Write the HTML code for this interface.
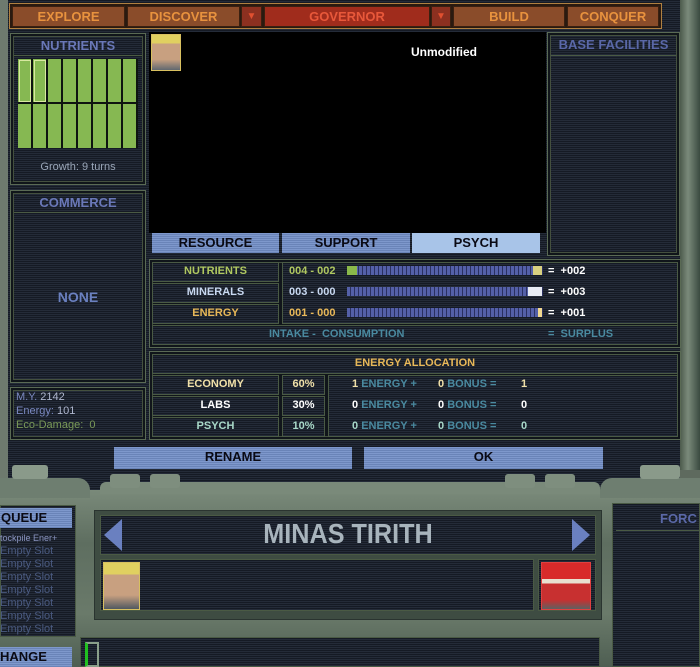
<!DOCTYPE html>
<html><head><style>
*{margin:0;padding:0;box-sizing:border-box}
body{width:700px;height:667px;overflow:hidden;background:#5e6a5e;font-family:"Liberation Sans",sans-serif;position:relative}
.a{position:absolute}
.scan{background:repeating-linear-gradient(#151a24 0 1px,#242b38 1px 2px)}
.pan{position:absolute;border:1px solid #5a6a54;box-shadow:inset 0 0 0 2px #10151a,inset 0 0 0 3px #44503e}
.cell{position:absolute;border:1px solid #4a5a44;background:repeating-linear-gradient(#151a24 0 1px,#242b38 1px 2px)}
.t{position:absolute;font-weight:bold;text-align:center;white-space:nowrap}
.tb{position:absolute;top:6px;height:21px;background:#8a4c2a;border:1px solid #3a2010;color:#e8923e;font-weight:bold;font-size:13px;text-align:center;line-height:20px}
.btn{position:absolute;background:repeating-linear-gradient(#7e98cc 0 1px,#6a84b8 1px 2px);color:#0a0a14;font-weight:bold;font-size:13px;text-align:center;line-height:20px}
.bar{position:absolute;height:9px;background:repeating-linear-gradient(90deg,#5460a8 0 3px,#2a3060 3px 4px)}
.n{position:absolute;font-weight:bold;font-size:11px;white-space:nowrap}
.g{color:#4a8aa0}
</style></head><body>
<div class="a scan" style="left:8px;top:0;width:672px;height:492px"></div>
<div class="a" style="left:680px;top:0;width:20px;height:470px;background:linear-gradient(90deg,#4c5a4c,#7a8a7a 40%,#3a4a40)"></div>
<div class="a" style="left:0;top:0;width:8px;height:480px;background:#6e7a6e"></div>
<div class="a" style="left:9px;top:3px;width:653px;height:26px;border:1px solid #b08040;background:#2a1a10"></div>
<div class="tb" style="left:12px;width:113px">EXPLORE</div>
<div class="tb" style="left:127px;width:113px">DISCOVER</div>
<div class="tb" style="left:241px;width:21px;background:#8c3020;color:#e05030;font-size:10px">▼</div>
<div class="tb" style="left:264px;width:166px;background:#a02c1c;color:#e8583a">GOVERNOR</div>
<div class="tb" style="left:431px;width:20px;background:#8c3020;color:#e05030;font-size:10px">▼</div>
<div class="tb" style="left:453px;width:112px">BUILD</div>
<div class="tb" style="left:567px;width:92px">CONQUER</div>
<div class="pan scan" style="left:10px;top:33px;width:136px;height:152px"></div>
<div class="t" style="left:10px;top:38px;width:136px;font-size:13px;color:#6a78b8">NUTRIENTS</div>
<div class="a" style="left:14px;top:55px;width:128px;height:1px;background:#4a5a44"></div>
<div class="a" style="left:18px;top:59px;width:120px;height:89px;background:#0e1410"></div>
<div class="a" style="left:18px;top:59px;width:120px;height:89px;background:repeating-linear-gradient(90deg,#86b852 0 13px,#0e1410 13px 15px)"></div>
<div class="a" style="left:18px;top:102px;width:120px;height:2px;background:#0e1410"></div>
<div class="a" style="left:19px;top:60px;width:12px;height:42px;border:1px solid #d8e8a0"></div>
<div class="a" style="left:34px;top:60px;width:12px;height:42px;border:1px solid #d8e8a0"></div>
<div class="a" style="left:10px;top:161px;width:136px;text-align:center;color:#9aa6b8;font-size:11px">Growth: 9 turns</div>
<div class="pan scan" style="left:10px;top:190px;width:136px;height:193px"></div>
<div class="t" style="left:10px;top:195px;width:136px;font-size:13px;color:#6a78b8">COMMERCE</div>
<div class="a" style="left:14px;top:212px;width:128px;height:1px;background:#4a5a44"></div>
<div class="t" style="left:10px;top:289px;width:136px;font-size:14px;color:#6a80c0">NONE</div>
<div class="pan scan" style="left:10px;top:387px;width:136px;height:53px"></div>
<div class="a" style="left:16px;top:390px;font-size:11px;line-height:14px;color:#7a88c0">M.Y. <span style="color:#b0b8d0">2142</span><br>Energy: <span style="color:#b0b8d0">101</span><br><span style="color:#7a9a58">Eco-Damage:&nbsp; 0</span></div>
<div class="a" style="left:149px;top:32px;width:397px;height:201px;background:#000"></div>
<div class="a" style="left:151px;top:34px;width:30px;height:37px;border:1px solid #d8c060;background:linear-gradient(#e0d060 0 25%,#c8a080 25% 70%,#606870)"></div>
<div class="t" style="left:411px;top:45px;font-size:12px;color:#fff">Unmodified</div>
<div class="pan scan" style="left:547px;top:32px;width:133px;height:224px"></div>
<div class="t" style="left:547px;top:37px;width:133px;font-size:13px;color:#5a68a8">BASE FACILITIES</div>
<div class="a" style="left:551px;top:55px;width:125px;height:1px;background:#4a5a44"></div>
<div class="btn" style="left:152px;top:233px;width:127px;height:20px">RESOURCE</div>
<div class="btn" style="left:282px;top:233px;width:128px;height:20px">SUPPORT</div>
<div class="btn" style="left:412px;top:233px;width:128px;height:20px;background:#a8c4e8">PSYCH</div>
<div class="pan" style="left:149px;top:259px;width:532px;height:89px;background:#10151a"></div>
<div class="cell" style="left:152px;top:262px;width:127px;height:20px"></div>
<div class="cell" style="left:152px;top:283px;width:127px;height:20px"></div>
<div class="cell" style="left:152px;top:304px;width:127px;height:20px"></div>
<div class="cell" style="left:282px;top:262px;width:396px;height:62px"></div>
<div class="cell" style="left:152px;top:325px;width:526px;height:20px"></div>
<div class="t" style="left:152px;top:265px;width:127px;font-size:11px;color:#b0c860">NUTRIENTS</div>
<div class="t" style="left:152px;top:286px;width:127px;font-size:11px;color:#c8d8f0">MINERALS</div>
<div class="t" style="left:152px;top:307px;width:127px;font-size:11px;color:#e8b858">ENERGY</div>
<div class="n" style="left:289px;top:265px;color:#b0c860">004 - 002</div>
<div class="n" style="left:289px;top:286px;color:#c8d8f0">003 - 000</div>
<div class="n" style="left:289px;top:307px;color:#e8b858">001 - 000</div>
<div class="bar" style="left:347px;top:266px;width:196px"></div>
<div class="a" style="left:347px;top:266px;width:10px;height:9px;background:#8ab84a"></div>
<div class="a" style="left:533px;top:266px;width:9px;height:9px;background:#d8d080"></div>
<div class="bar" style="left:347px;top:287px;width:196px"></div>
<div class="a" style="left:528px;top:287px;width:14px;height:9px;background:#e8ecf4"></div>
<div class="bar" style="left:347px;top:308px;width:196px"></div>
<div class="a" style="left:538px;top:308px;width:4px;height:9px;background:#f0d890"></div>
<div class="n" style="left:548px;top:265px;color:#fff">=&nbsp; +002</div>
<div class="n" style="left:548px;top:286px;color:#fff">=&nbsp; +003</div>
<div class="n" style="left:548px;top:307px;color:#fff">=&nbsp; +001</div>
<div class="n g" style="left:269px;top:328px">INTAKE -&nbsp; CONSUMPTION</div>
<div class="n g" style="left:548px;top:328px">=&nbsp; SURPLUS</div>
<div class="pan" style="left:149px;top:351px;width:532px;height:89px;background:#10151a"></div>
<div class="cell" style="left:152px;top:354px;width:526px;height:20px"></div>
<div class="t" style="left:152px;top:357px;width:526px;font-size:11px;color:#e8b858">ENERGY ALLOCATION</div>
<div class="cell" style="left:152px;top:375px;width:127px;height:20px"></div>
<div class="cell" style="left:152px;top:396px;width:127px;height:20px"></div>
<div class="cell" style="left:152px;top:417px;width:127px;height:20px"></div>
<div class="cell" style="left:282px;top:375px;width:43px;height:20px"></div>
<div class="cell" style="left:282px;top:396px;width:43px;height:20px"></div>
<div class="cell" style="left:282px;top:417px;width:43px;height:20px"></div>
<div class="cell" style="left:328px;top:375px;width:350px;height:62px"></div>
<div class="t" style="left:152px;top:378px;width:127px;font-size:11px;color:#f0e0a8">ECONOMY</div>
<div class="t" style="left:152px;top:399px;width:127px;font-size:11px;color:#fff">LABS</div>
<div class="t" style="left:152px;top:420px;width:127px;font-size:11px;color:#a8d8c8">PSYCH</div>
<div class="t" style="left:282px;top:378px;width:43px;font-size:11px;color:#f0e0a8">60%</div>
<div class="t" style="left:282px;top:399px;width:43px;font-size:11px;color:#fff">30%</div>
<div class="t" style="left:282px;top:420px;width:43px;font-size:11px;color:#a8d8c8">10%</div>
<div class="n" style="left:352px;top:378px;color:#f0e0a8">1 <span class="g">ENERGY +</span></div>
<div class="n" style="left:438px;top:378px;color:#f0e0a8">0 <span class="g">BONUS =</span></div>
<div class="n" style="left:521px;top:378px;color:#f0e0a8">1</div>
<div class="n" style="left:352px;top:399px;color:#fff">0 <span class="g">ENERGY +</span></div>
<div class="n" style="left:438px;top:399px;color:#fff">0 <span class="g">BONUS =</span></div>
<div class="n" style="left:521px;top:399px;color:#fff">0</div>
<div class="n" style="left:352px;top:420px;color:#a8d8c8">0 <span class="g">ENERGY +</span></div>
<div class="n" style="left:438px;top:420px;color:#a8d8c8">0 <span class="g">BONUS =</span></div>
<div class="n" style="left:521px;top:420px;color:#a8d8c8">0</div>
<div class="btn" style="left:114px;top:447px;width:238px;height:22px">RENAME</div>
<div class="btn" style="left:364px;top:447px;width:239px;height:22px">OK</div>
<div class="a" style="left:0;top:490px;width:700px;height:177px;background:linear-gradient(#7a8a7a,#5e6e60 30%,#6a7a6a 70%,#4e5e52)"></div>
<div class="a" style="left:0;top:478px;width:90px;height:20px;background:#6e7e70;border-radius:0 12px 0 0"></div>
<div class="a" style="left:600px;top:478px;width:100px;height:20px;background:#6e7e70;border-radius:12px 0 0 0"></div>
<div class="a" style="left:100px;top:482px;width:500px;height:12px;background:#7a8a7a;border-radius:6px 6px 0 0"></div>
<div class="a" style="left:110px;top:474px;width:30px;height:14px;background:#7e8e7e;border-radius:3px"></div>
<div class="a" style="left:150px;top:474px;width:30px;height:14px;background:#7e8e7e;border-radius:3px"></div>
<div class="a" style="left:505px;top:474px;width:30px;height:14px;background:#7e8e7e;border-radius:3px"></div>
<div class="a" style="left:545px;top:474px;width:30px;height:14px;background:#7e8e7e;border-radius:3px"></div>
<div class="a" style="left:640px;top:465px;width:40px;height:14px;background:#8a9a8a;border-radius:3px"></div>
<div class="a" style="left:12px;top:465px;width:36px;height:14px;background:#8a9a8a;border-radius:3px"></div>
<div class="a scan" style="left:0;top:505px;width:76px;height:132px;border:1px solid #4a5a44"></div>
<div class="btn" style="left:0;top:508px;width:72px;height:20px;text-align:left;padding-left:1px;font-size:13px">QUEUE</div>
<div class="a" style="left:0;top:532px;font-size:9px;line-height:13px;color:#8a94c0">tockpile Ener+<br><span style="font-size:11px;color:#4a5a80">Empty Slot<br>Empty Slot<br>Empty Slot<br>Empty Slot<br>Empty Slot<br>Empty Slot<br>Empty Slot</span></div>
<div class="btn" style="left:0;top:647px;width:72px;height:20px;text-align:left;font-size:13px">HANGE</div>
<div class="a" style="left:94px;top:510px;width:508px;height:110px;background:#3e4c42;border:1px solid #2a3430"></div>
<div class="cell" style="left:100px;top:515px;width:496px;height:40px"></div>
<div class="a" style="left:104px;top:519px;width:0;height:0;border-top:16px solid transparent;border-bottom:16px solid transparent;border-right:18px solid #6a80c0"></div>
<div class="a" style="left:572px;top:519px;width:0;height:0;border-top:16px solid transparent;border-bottom:16px solid transparent;border-left:18px solid #6a80c0"></div>
<div class="t" style="left:100px;top:518px;width:496px;font-size:28px;color:#a8b4bc;transform:scaleX(.9)">MINAS TIRITH</div>
<div class="cell" style="left:100px;top:559px;width:434px;height:52px"></div>
<div class="cell" style="left:538px;top:559px;width:58px;height:52px"></div>
<div class="a" style="left:103px;top:562px;width:37px;height:48px;border:1px solid #d8c060;background:linear-gradient(#e0d060 0 25%,#c8a080 25% 70%,#505860)"></div>
<div class="a" style="left:541px;top:562px;width:50px;height:48px;border:1px solid #e04040;background:linear-gradient(#d82a2a 0 35%,#e8e0d0 35% 45%,#c83030 45% 80%,#606060)"></div>
<div class="cell" style="left:80px;top:637px;width:520px;height:30px"></div>
<div class="a" style="left:85px;top:642px;width:14px;height:25px;border:2px solid #8aa08a;border-left:3px solid #20c020"></div>
<div class="a scan" style="left:612px;top:503px;width:88px;height:164px;border:1px solid #4a5a44"></div>
<div class="t" style="left:660px;top:511px;font-size:13px;color:#5a68a8">FORC</div>
<div class="a" style="left:616px;top:530px;width:84px;height:1px;background:#4a5a44"></div>
</body></html>
